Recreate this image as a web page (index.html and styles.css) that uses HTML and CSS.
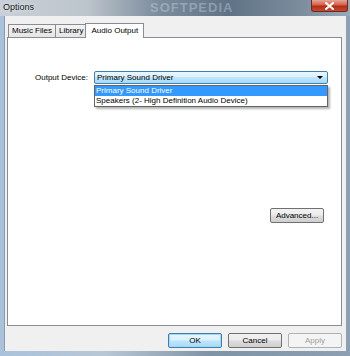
FILE: index.html
```html
<!DOCTYPE html>
<html lang="en">
<head>
    <meta charset="UTF-8">
    <title>Options</title>
    <link rel="stylesheet" href="styles.css">
</head>
<body>
    <div class="window">
        <div class="titlebar">
            <span class="title">Options</span>
            <span class="watermark">SOFTPEDIA</span>
            <div class="close-btn">
                <svg width="9" height="8" viewBox="0 0 9 8"><path d="M1 1 L8 7 M8 1 L1 7" stroke="#fff" stroke-width="2" stroke-linecap="square"/></svg>
            </div>
        </div>
        <div class="client">
            <div class="tabs">
                <div class="tab">Music Files</div>
                <div class="tab">Library</div>
                <div class="tab active">Audio Output</div>
            </div>
            <div class="panel">
                <div class="device-row">
                    <span class="label">Output Device:</span>
                    <div class="combo-wrap">
                        <div class="combo">
                            <span>Primary Sound Driver</span>
                            <span class="arrow"></span>
                        </div>
                        <ul class="droplist">
                            <li class="selected">Primary Sound Driver</li>
                            <li>Speakers (2- High Definition Audio Device)</li>
                        </ul>
                    </div>
                </div>
                <div class="advanced-row">
                    <button class="btn">Advanced...</button>
                </div>
            </div>
            <div class="dialog-buttons">
                <button class="btn default">OK</button>
                <button class="btn">Cancel</button>
                <button class="btn disabled">Apply</button>
            </div>
        </div>
    </div>
</body>
</html>
```

FILE: styles.css
```css
body {
    margin: 0;
    padding: 0;
    font-family: "Liberation Sans", Arial, sans-serif;
    font-size: 8px;
    color: #000;
    background-color: #fff;
}
.window {
    width: 350px;
    height: 356px;
    box-sizing: border-box;
    padding: 0 4px 5px 4px;
    display: flex;
    flex-direction: column;
    background: linear-gradient(90deg, #a9c2dc 0%, #b8c7d6 30%, #7f93a6 60%, #8da0b3 100%);
}
.titlebar {
    height: 16px;
    position: relative;
    margin: 0 -4px;
    overflow: hidden;
    background: linear-gradient(90deg, #c9d0d8 0%, #bcc4cc 25%, #7c8d9d 45%, #5f7386 65%, #7a8b9c 85%, #9aa9b8 100%);
}
.title {
    position: absolute;
    left: 3px;
    top: 2px;
    font-size: 9px;
    color: #1a1a1a;
    text-shadow: 0 0 4px rgba(255, 255, 255, 0.9);
}
.watermark {
    position: absolute;
    left: 150px;
    top: 1px;
    font-size: 13px;
    line-height: 14px;
    font-weight: bold;
    letter-spacing: 1px;
    color: rgba(220, 230, 240, 0.35);
}
.close-btn {
    position: absolute;
    right: 2px;
    top: 0;
    width: 35px;
    height: 11px;
    border: 1px solid #6a2a23;
    border-top: none;
    border-radius: 0 0 3px 3px;
    background: linear-gradient(#e8a493 0%, #d2604a 45%, #b32b15 55%, #c94a2b 100%);
    display: flex;
    align-items: center;
    justify-content: center;
}
.client {
    flex: 1;
    background-color: #f0f0f0;
    display: flex;
    flex-direction: column;
    padding: 7px 4px 0 2px;
    border-left: 1px solid #8e9aa6;
}
.tabs {
    display: flex;
    align-items: flex-end;
    height: 14px;
    padding-left: 1px;
}
.tab {
    height: 12px;
    line-height: 12px;
    padding: 0 3px;
    border: 1px solid #898c95;
    border-bottom: none;
    border-right: none;
    background: linear-gradient(#f3f3f3, #e5e5e5);
}
.tab.active {
    height: 14px;
    line-height: 13px;
    padding: 0 5px;
    border-right: 1px solid #898c95;
    background: #fff;
    margin-left: -1px;
    position: relative;
    top: 1px;
    z-index: 1;
}
.panel {
    height: 289px;
    box-sizing: border-box;
    border: 1px solid #898c95;
    background-color: #fff;
    position: relative;
}
.device-row {
    display: flex;
    align-items: center;
    margin-top: 33px;
    padding-left: 27px;
}
.label {
    width: 59px;
}
.combo-wrap {
    position: relative;
    width: 234px;
}
.combo {
    height: 13px;
    box-sizing: border-box;
    border: 1px solid #3c7fb1;
    border-radius: 2px;
    background: linear-gradient(#eaf6fd 0%, #d9f0fc 45%, #bee6fd 50%, #a7d9f5 100%);
    display: flex;
    align-items: center;
    justify-content: space-between;
    padding: 0 4px 0 2px;
}
.arrow {
    width: 0;
    height: 0;
    border-left: 3px solid transparent;
    border-right: 3px solid transparent;
    border-top: 3px solid #000;
}
.droplist {
    position: absolute;
    top: 14px;
    left: 0;
    width: 234px;
    box-sizing: border-box;
    margin: 0;
    padding: 0;
    list-style: none;
    background: #fff;
    border: 1px solid #646464;
    box-shadow: 2px 2px 2px rgba(0, 0, 0, 0.3);
    z-index: 2;
}
.droplist li {
    height: 10px;
    line-height: 10px;
    padding-left: 1px;
}
.droplist li.selected {
    background-color: #3399ff;
    color: #fff;
}
.advanced-row {
    display: flex;
    justify-content: flex-end;
    margin-top: 124px;
    padding-right: 17px;
}
.btn {
    width: 54px;
    height: 15px;
    padding: 0;
    font-family: "Liberation Sans", Arial, sans-serif;
    font-size: 8px;
    color: #000;
    border: 1px solid #707070;
    border-radius: 2px;
    background: linear-gradient(#f2f2f2 0%, #ebebeb 48%, #dddddd 52%, #cfcfcf 100%);
}
.btn.default {
    border-color: #3c7fb1;
    box-shadow: inset 0 0 0 1px #9fd7f5;
    background: linear-gradient(#eaf6fd 0%, #d9f0fc 48%, #bee6fd 52%, #a7d9f5 100%);
}
.btn.disabled {
    color: #a0a0a0;
    border-color: #adb2b5;
    background: #f4f4f4;
}
.dialog-buttons {
    display: flex;
    justify-content: flex-end;
    gap: 6px;
    padding-top: 7px;
}
```
